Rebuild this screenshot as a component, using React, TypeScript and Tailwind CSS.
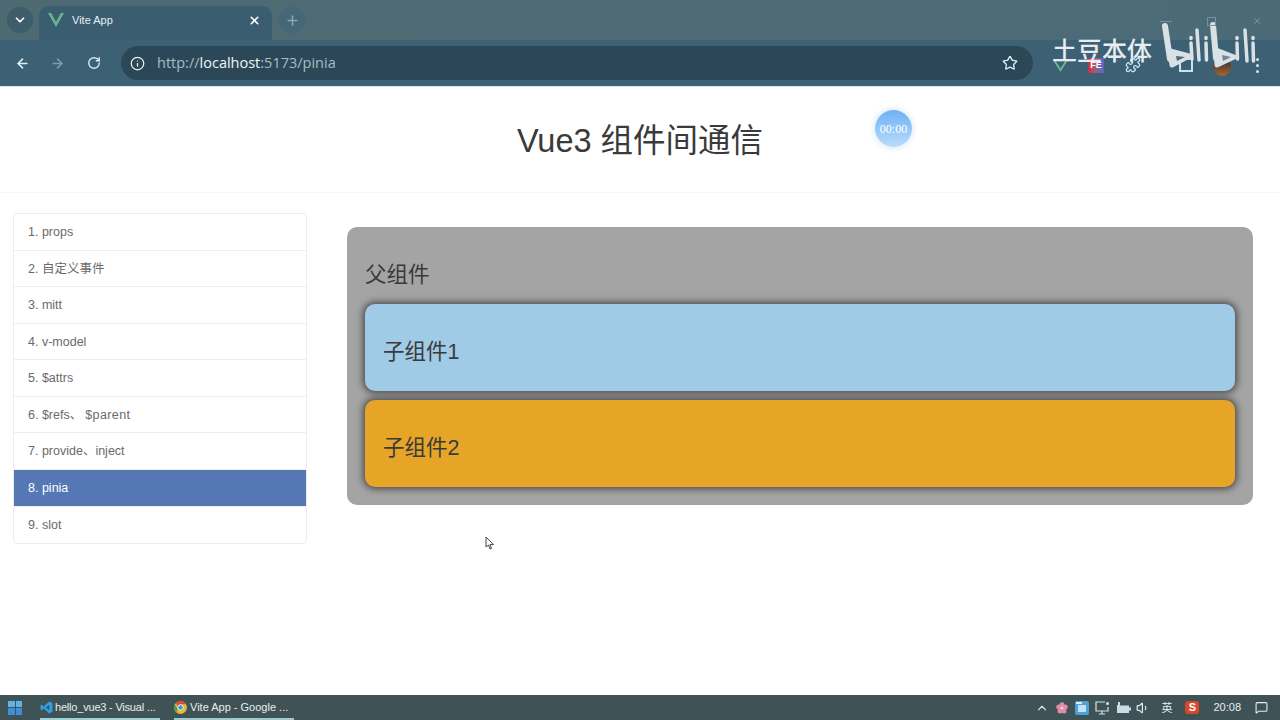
import React from "react";
import { ArrowLeft, ArrowRight, RotateCw, Info, Star, ChevronDown, X, Plus, ChevronUp, Volume1, MessageSquare, Puzzle } from "lucide-react";

const font = "font-['Liberation_Sans','Noto_Sans_CJK_SC',sans-serif]";
const items = ["1. props", "2. 自定义事件", "3. mitt", "4. v-model", "5. $attrs", "6. $refs、", "7. provide、inject", "8. pinia", "9. slot"];

function Child({ label, bg }: { label: string; bg: string }) {
  return (
    <div className={`h-[87px] rounded-[10px] ${bg} shadow-[0_0_7px_2px_rgba(0,0,0,0.55)] pl-[18px] pt-[35px] text-[21.500px] leading-[26px] text-[#3a3a3a]`}>
      {label}
    </div>
  );
}

export default function App() {
  return (
    <div className={`relative flex h-[720px] w-[1280px] flex-col overflow-hidden bg-white ${font}`}>
      <header className="h-[87px] shrink-0 border-b border-b-[#dfe6e8] bg-[#3f6170]">
        <div className="flex h-[40px] items-center bg-gradient-to-r from-[#4d6a72] via-[#4f6b75] to-[#4b6a78] pl-[7px]">
          <div className="flex h-[26px] w-[26px] items-center justify-center rounded-full bg-[#3e5d6b] text-white">
            <ChevronDown size={14} strokeWidth={3} />
          </div>
          <div className="ml-[6px] flex h-[34px] w-[233px] items-center self-end rounded-t-[10px] bg-[#3b5d70] pb-[6px] pl-[9px] pr-[11px]">
            <svg width="16" height="14" viewBox="0 0 16 14">
              <path d="M0 0h3.200L8 8.500 12.800 0H16L8 14z" fill="#68b58e" />
              <path d="M3.200 0h2.500L8 4l2.300-4h2.500L8 8.500z" fill="#3f5f6c" />
            </svg>
            <span className="ml-[8px] flex-1 text-[11px] text-[#e6eef0]">Vite App</span>
            <X size={13} strokeWidth={3} className="text-white" />
          </div>
          <div className="ml-[7px] flex h-[26px] w-[26px] items-center justify-center rounded-full bg-[#466778] text-[#8ba6b3]">
            <Plus size={15} strokeWidth={2.500} />
          </div>
        </div>
        <div className="flex h-[46px] items-center bg-[#3c6074] pl-[15px]">
          <ArrowLeft size={15} strokeWidth={2.500} className="text-[#e4eef2]" />
          <ArrowRight size={15} strokeWidth={2.500} className="ml-[20px] text-[#7d9cab]" />
          <RotateCw size={14} strokeWidth={2.500} className="ml-[22px] text-[#d8e6ec]" />
          <div className="ml-[20px] flex h-[34px] w-[912px] items-center rounded-full bg-[#2c4858] pl-[9px] pr-[15px]">
            <Info size={15} strokeWidth={2} className="text-[#eef4f6]" />
            <span className="ml-[12px] flex-1 pb-[1px] font-['Open_Sans',sans-serif] text-[14.500px] text-[#a6bcc6]">
              http://<span className="text-[#f1f5f7]">localhost</span>:5173/pinia
            </span>
            <Star size={16} strokeWidth={2} className="text-[#e3ecef]" />
          </div>
          <div className="ml-[20px] flex items-center pt-[4px]">
            <svg width="15" height="13" viewBox="0 0 16 14">
              <path d="M1 1l7 11 7-11" stroke="#6dbb90" strokeWidth="2" fill="none" />
            </svg>
            <div className="ml-[20px] flex h-[15px] w-[16px] items-center justify-center bg-gradient-to-r from-[#d22b35] to-[#5068c8] text-[9px] font-bold leading-none text-white">FE</div>
            <Puzzle size={16} className="ml-[21px] text-[#c5e4f0]" />
            <div className="ml-[38px] h-[14px] w-[14px] border-2 border-[#c5e4f0]" />
            <div className="ml-[20px] mt-[3px] h-[18px] w-[18px] rounded-full bg-gradient-to-b from-[#2a2a2a] to-[#a8672b]" />
            <div className="ml-[25px] flex flex-col gap-[3px]">
              <i className="h-[3px] w-[3px] rounded-full bg-[#d5e6ee]" />
              <i className="h-[3px] w-[3px] rounded-full bg-[#d5e6ee]" />
              <i className="h-[3px] w-[3px] rounded-full bg-[#d5e6ee]" />
            </div>
          </div>
        </div>
      </header>

      <main className="flex-1 bg-white text-[#3a3a3a]">
        <h1 className="h-[106px] border-b border-b-[#f8f8f8] pt-[34px] text-center text-[32.500px] font-normal leading-[40px]">
          Vue3 组件间通信
        </h1>
        <div className="flex items-start pl-[13px] pr-[27px] pt-[20px]">
          <nav className="w-[294px] overflow-hidden rounded-[4px] border border-[#ececec] bg-white">
            {items.map((t, i) => (
              <div
                key={t}
                className={`flex items-center pl-[14px] pt-[2px] text-[12.500px] ${i === 7 ? "h-[37.500px] bg-[#5577b3] text-white" : i === 8 ? "h-[35.500px] text-[#6a6a6a]" : "h-[36.500px] text-[#6a6a6a]"} ${i < 8 ? "border-b border-b-[#eeeeee]" : ""}`}
              >
                {t}
                {i === 5 ? <span className="ml-[3px] tracking-[0.400px]">$parent</span> : null}
              </div>
            ))}
          </nav>
          <section className="ml-[40px] mt-[14px] h-[278px] flex-1 rounded-[10px] bg-[#a4a4a4] px-[18px] pt-[34px]">
            <div className="h-[43px] text-[21.500px] leading-[28px] text-[#3a3a3a]">父组件</div>
            <div className="flex flex-col gap-[9px]">
              <Child label="子组件1" bg="bg-[#a0cbe6]" />
              <Child label="子组件2" bg="bg-[#e6a527]" />
            </div>
          </section>
        </div>
      </main>

      <footer className="flex h-[25px] shrink-0 items-center bg-[#3f5356] text-[11px] text-[#e8eeee]">
        <div className="ml-[8px] grid h-[14px] w-[14px] grid-cols-2 gap-[1px]">
          <i className="bg-[#5fb2e8]" /><i className="bg-[#5fb2e8]" /><i className="bg-[#3f8fd8]" /><i className="bg-[#3f8fd8]" />
        </div>
        <div className="relative ml-[18px] flex h-full w-[120px] items-center">
          <svg width="13" height="13" viewBox="0 0 24 24" fill="#2f9fe6"><path d="M17 1l6 3v16l-6 3L7 14l-4 3-2-1V8l2-1 4 3zM17 7l-6 5 6 5z" /></svg>
          <span className="ml-[2px] tracking-[-0.200px]">hello_vue3 - Visual ...</span>
          <i className="absolute bottom-0 left-0 h-[2px] w-full bg-[#9fd0d6]" />
        </div>
        <div className="relative ml-[14px] flex h-full w-[120px] items-center">
          <svg width="13" height="13" viewBox="0 0 24 24">
            <circle cx="12" cy="12" r="12" fill="#e8b82e" />
            <path d="M12 0a12 12 0 0 1 10.400 6H12a6 6 0 0 0-5.200 3L3.500 3.500A12 12 0 0 1 12 0z" fill="#d94a38" />
            <path d="M1.600 6L7 15l-3 6A12 12 0 0 1 1.600 6z" fill="#4c9d50" />
            <circle cx="12" cy="12" r="5" fill="#4a8ee0" stroke="#fff" strokeWidth="1.500" />
          </svg>
          <span className="ml-[3px]">Vite App - Google ...</span>
          <i className="absolute bottom-0 left-0 h-[2px] w-full bg-[#9fc9cc]" />
        </div>
        <div className="ml-auto flex items-center pr-[12px]">
          <ChevronUp size={14} className="text-[#d8e0e0]" />
          <svg className="ml-[7px]" width="12" height="12" viewBox="0 0 12 12">
            <g fill="#e58aa6">
              <circle cx="6" cy="2.800" r="2.500" /><circle cx="9.200" cy="5" r="2.500" /><circle cx="8" cy="9" r="2.500" />
              <circle cx="4" cy="9" r="2.500" /><circle cx="2.800" cy="5" r="2.500" />
            </g>
            <circle cx="6" cy="6" r="1.500" fill="#f6d0dc" />
          </svg>
          <svg className="ml-[7px]" width="14" height="14" viewBox="0 0 14 14">
            <rect width="14" height="14" rx="2" fill="#4f9fd8" />
            <rect x="3" y="4" width="8" height="7" fill="#bfe2f4" />
            <rect x="1" y="1" width="6" height="2" fill="#d9eef8" />
          </svg>
          <svg className="ml-[6px]" width="15" height="14" viewBox="0 0 15 14" fill="none" stroke="#d8e2e2" strokeWidth="1.200">
            <path d="M10 1H1v9h12V6M7 10v3M4 13h6" />
            <circle cx="12.500" cy="2.500" r="1.500" fill="#d8e2e2" stroke="none" />
          </svg>
          <svg className="ml-[6px]" width="15" height="13" viewBox="0 0 15 13">
            <path d="M2 1v3h-1v8h12V4.500H4V1z" fill="#c8dde6" />
            <rect x="13" y="6.500" width="2" height="3" fill="#c8dde6" />
          </svg>
          <Volume1 size={14} className="ml-[5px]" />
          <span className="ml-[11px] font-['Noto_Sans_CJK_SC',sans-serif] text-[11px]">英</span>
          <div className="ml-[13px] flex h-[13px] w-[14px] items-center justify-center rounded-[3px] bg-[#d9472b] text-[11px] font-bold leading-none text-white">S</div>
          <span className="ml-[14px] text-[11px]">20:08</span>
          <MessageSquare size={13} className="ml-[14px]" />
        </div>
      </footer>

      {/* video overlays */}
      <div className="absolute left-[875px] top-[110px] flex h-[37px] w-[37px] items-center justify-center rounded-full bg-gradient-to-b from-[#6fb0f4] to-[#b9dcfa] font-['Liberation_Serif',serif] text-[12px] text-white shadow-[0_0_5px_2px_rgba(134,189,245,0.25)]">
        00:00
      </div>
      <div className="absolute left-[1052px] top-[31px] font-['Noto_Sans_CJK_SC',sans-serif] text-[25px] font-medium leading-[36px] text-[#e6ecef]">土豆本体</div>
      <svg className="absolute left-[1150px] top-[10px]" width="125" height="70" viewBox="0 0 125 70" fill="none" stroke="#d9e1e5" strokeLinecap="round">
        <g strokeWidth="6">
          <path d="M15 16l5 33" />
          <path d="M63 15l3 33" />
        </g>
        <path d="M20 41l19 5-17 9z" fill="#d9e1e5" strokeWidth="5" strokeLinejoin="round" />
        <path d="M66 40l18 7-17 8z" fill="#d9e1e5" strokeWidth="5" strokeLinejoin="round" />
        <path d="M26 46l9 1-8 4z" fill="#4a6878" stroke="none" />
        <path d="M72 45l9 2-8 4z" fill="#6d8793" stroke="none" />
        <g strokeWidth="3.500">
          <path d="M41 27.500v1M41 33l1 16" />
          <path d="M47 20l2 30" />
          <path d="M56 27.500v1M56 33l.5 17" />
          <path d="M87 27.500v1M87 33l.5 16" />
          <path d="M95 20l2 31" />
          <path d="M103 27.500v1M103 33l.5 18" />
        </g>
      </svg>
      <div className="absolute left-[1160px] top-[15px] flex w-[103px] items-center justify-between text-[#78929c]">
        <span className="h-px w-[12px] bg-[#78929c]" />
        <span className="h-[9px] w-[9px] border border-[#78929c]" />
        <X size={12} />
      </div>
      {/* cursor */}
      <svg className="absolute left-[485px] top-[536px]" width="10" height="14" viewBox="0 0 10 14">
        <path d="M1 1v10l2.500-2 1.500 4 1.500-.6-1.500-3.800H8.500z" fill="#fff" stroke="#444" strokeWidth="1" />
      </svg>
    </div>
  );
}
